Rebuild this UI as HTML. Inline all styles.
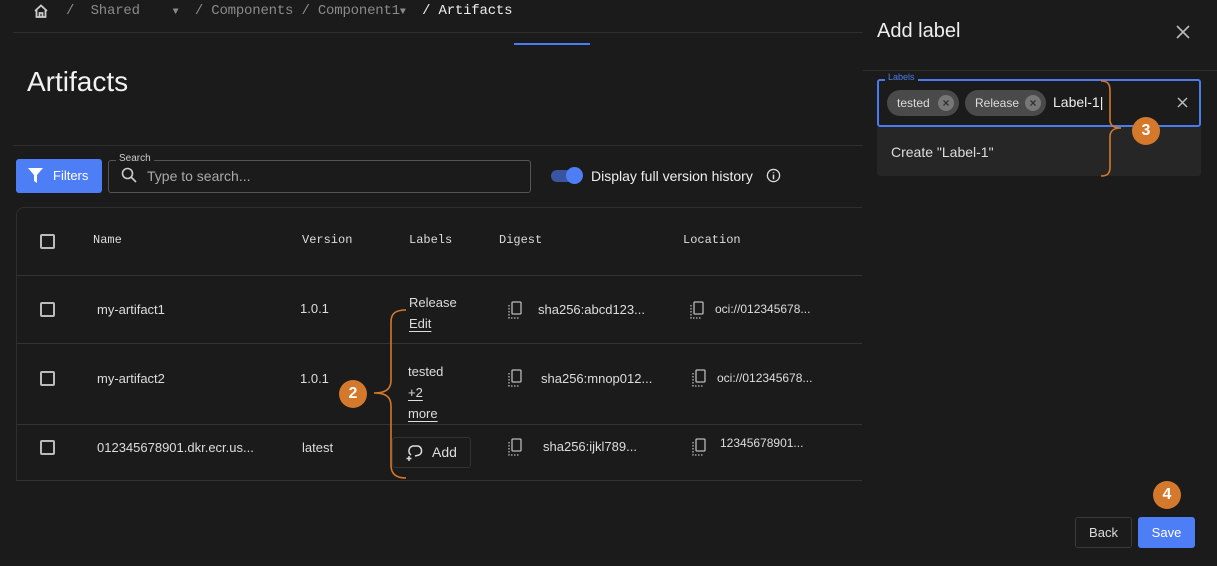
<!DOCTYPE html>
<html><head><meta charset="utf-8"><style>
*{box-sizing:border-box;margin:0;padding:0}
body{width:1217px;height:566px;background:#1b1b1b;color:#e6e6e6;font-family:"Liberation Sans",sans-serif;position:relative;overflow:hidden;font-size:14px}
.a{position:absolute;white-space:nowrap}
.mono{font-family:"Liberation Mono",monospace}
.hl{position:absolute;height:1px;background:#333}
.cb{position:absolute;width:15px;height:15px;border:2px solid #bbb;border-radius:2px}
.badge{position:absolute;width:28px;height:28px;border-radius:50%;background:#d4782c;color:#fff;font-weight:bold;font-size:16px;text-align:center;line-height:28px}
.chip{position:absolute;height:26px;border-radius:13px;background:#4a4a4a;color:#ddd;font-size:12px;line-height:26px;padding-left:10px}
.chip i{position:absolute;right:5px;top:5px;width:16px;height:16px;border-radius:50%;background:#777;color:#333;font-style:normal;font-size:12px;line-height:16px;text-align:center;font-weight:bold}
u{text-decoration:underline;text-underline-offset:3px}
.th{font-size:12px;top:233px}
</style></head><body>
<svg class="a" style="left:33px;top:3px" width="16" height="16" viewBox="0 0 16 16"><path d="M2 8L8 2.5 14 8M3.5 7v7h9V7M6.5 14V10h3v4" fill="none" stroke="#ccc" stroke-width="1.8"/></svg>
<div class="a mono" style="left:66px;top:3px;font-size:14px;color:#8a8a8a;letter-spacing:-0.2px">/&nbsp;&nbsp;Shared&nbsp;&nbsp;&nbsp;&nbsp;<span style="font-size:10px">▼</span>&nbsp;&nbsp;/ Components / Component1<span style="font-size:10px">▼</span>&nbsp;&nbsp;<span style="color:#eee">/ Artifacts</span></div>
<div class="hl" style="left:13px;top:32px;width:850px;background:#2e2e2e"></div>
<div class="a" style="left:514px;top:43px;width:76px;height:2px;background:#4a7cf0"></div>
<div class="a" style="left:27px;top:66px;font-size:28px;color:#f2f2f2">Artifacts</div>
<div class="hl" style="left:13px;top:145px;width:850px;background:#2e2e2e"></div>
<div class="a" style="left:16px;top:159px;width:86px;height:34px;background:#4d7ef5;border-radius:3px;color:#fff;font-size:13px;line-height:34px;padding-left:37px">Filters</div>
<svg class="a" style="left:28px;top:168px" width="15" height="16" viewBox="0 0 15 16"><path d="M0 0h15L9 7v8L6 13V7z" fill="#fff"/></svg>
<div class="a" style="left:108px;top:160px;width:423px;height:33px;border:1px solid #555;border-radius:3px"></div>
<div class="a" style="left:116px;top:153px;background:#1b1b1b;padding:0 3px;font-size:10px;color:#ccc">Search</div>
<svg class="a" style="left:121px;top:167px" width="16" height="16" viewBox="0 0 16 16"><circle cx="6.5" cy="6.5" r="5" fill="none" stroke="#ccc" stroke-width="1.6"/><path d="M10 10l5 5" stroke="#ccc" stroke-width="1.6"/></svg>
<div class="a" style="left:147px;top:168px;font-size:14px;color:#aaa">Type to search...</div>
<div class="a" style="left:551px;top:170px;width:30px;height:12px;border-radius:6px;background:#3a55a0"></div>
<div class="a" style="left:566px;top:167px;width:17px;height:17px;border-radius:50%;background:#4d7ef5"></div>
<div class="a" style="left:591px;top:168px;font-size:14px;color:#eee">Display full version history</div>
<svg class="a" style="left:766px;top:168px" width="15" height="15" viewBox="0 0 16 16"><circle cx="8" cy="8" r="6.5" fill="none" stroke="#ddd" stroke-width="1.4"/><path d="M8 7v5M8 4.5v1" stroke="#ddd" stroke-width="1.6"/></svg>

<div class="a" style="left:16px;top:207px;width:846px;height:274px;border-left:1px solid #2e2e2e;border-top:1px solid #2e2e2e;border-top-left-radius:8px"></div>
<div class="hl" style="left:16px;top:275px;width:846px"></div>
<div class="hl" style="left:16px;top:343px;width:846px"></div>
<div class="hl" style="left:16px;top:424px;width:846px"></div>
<div class="hl" style="left:16px;top:480px;width:846px"></div>
<div class="cb" style="left:40px;top:234px"></div>
<div class="a mono th" style="left:93px;color:#ddd">Name</div>
<div class="a mono th" style="left:302px;color:#ddd">Version</div>
<div class="a mono th" style="left:409px;color:#ddd">Labels</div>
<div class="a mono th" style="left:499px;color:#ddd">Digest</div>
<div class="a mono th" style="left:683px;color:#ddd">Location</div>

<div class="cb" style="left:40px;top:302px"></div>
<div class="a" style="left:97px;top:302px;font-size:13px;color:#ddd">my-artifact1</div>
<div class="a" style="left:300px;top:301px;font-size:13px;color:#ddd">1.0.1</div>
<div class="a" style="left:409px;top:292px;font-size:13px;color:#ddd;line-height:21px">Release<br><u>Edit</u></div>
<div class="cb" style="left:40px;top:371px"></div>
<div class="a" style="left:97px;top:371px;font-size:13px;color:#ddd">my-artifact2</div>
<div class="a" style="left:300px;top:371px;font-size:13px;color:#ddd">1.0.1</div>
<div class="a" style="left:408px;top:361px;font-size:13px;color:#ddd;line-height:21px">tested<br><u>+2</u><br><u>more</u></div>
<div class="cb" style="left:40px;top:440px"></div>
<div class="a" style="left:97px;top:440px;font-size:13px;color:#ddd">012345678901.dkr.ecr.us...</div>
<div class="a" style="left:302px;top:440px;font-size:13px;color:#ddd">latest</div>
<div class="a" style="left:392px;top:437px;width:79px;height:31px;border:1px solid #333;border-radius:3px;font-size:14px;line-height:29px;padding-left:39px;color:#ddd">Add</div>
<svg class="a" style="left:406px;top:444px" width="18" height="17" viewBox="0 0 18 17"><path d="M5 11C2 9 2 3 7 2h5c4 1 5 7 1 9l-4 1M3 12v5M0.5 14.5h5" fill="none" stroke="#ddd" stroke-width="1.5"/></svg>

<svg class="a" style="left:0;top:0" width="870" height="500">
<g fill="none" stroke="#bbb" stroke-width="1.3">
<rect x="512" y="302" width="9" height="12" rx="1"/><path d="M509 305v13h10" stroke-dasharray="1.5 1.5"/>
<rect x="512" y="370" width="9" height="12" rx="1"/><path d="M509 373v13h10" stroke-dasharray="1.5 1.5"/>
<rect x="512" y="439" width="9" height="12" rx="1"/><path d="M509 442v13h10" stroke-dasharray="1.5 1.5"/>
<rect x="694" y="302" width="9" height="12" rx="1"/><path d="M691 305v13h10" stroke-dasharray="1.5 1.5"/>
<rect x="696" y="370" width="9" height="12" rx="1"/><path d="M693 373v13h10" stroke-dasharray="1.5 1.5"/>
<rect x="696" y="439" width="9" height="12" rx="1"/><path d="M693 442v13h10" stroke-dasharray="1.5 1.5"/>
</g>
<path d="M406 310C396 310 391 313 391 322V380C391 389 386 393 374 393C386 393 391 397 391 406V465C391 474 396 478 406 478" fill="none" stroke="#d4782c" stroke-width="1.6"/>
</svg>
<div class="a" style="left:538px;top:302px;font-size:13px;color:#ddd">sha256:abcd123...</div>
<div class="a" style="left:541px;top:371px;font-size:13px;color:#ddd">sha256:mnop012...</div>
<div class="a" style="left:543px;top:439px;font-size:13px;color:#ddd">sha256:ijkl789...</div>
<div class="a" style="left:715px;top:302px;font-size:12px;color:#ddd">oci://012345678...</div>
<div class="a" style="left:717px;top:371px;font-size:12px;color:#ddd">oci://012345678...</div>
<div class="a" style="left:720px;top:436px;font-size:12px;color:#ddd">12345678901...</div>
<div class="badge" style="left:339px;top:380px">2</div>

<div class="a" style="left:877px;top:20px;font-size:20px;color:#eee">Add label</div>
<svg class="a" style="left:1176px;top:25px" width="14" height="14" viewBox="0 0 14 14"><path d="M1 1l12 12M13 1L1 13" stroke="#bbb" stroke-width="1.6"/></svg>
<div class="hl" style="left:863px;top:70px;width:354px;background:#2e2e2e"></div>
<div class="a" style="left:877px;top:79px;width:324px;height:48px;border:2px solid #4a7cf0;border-radius:3px"></div>
<div class="a" style="left:885px;top:72px;background:#1b1b1b;padding:0 3px;font-size:9px;color:#4a7cf0">Labels</div>
<div class="chip" style="left:887px;top:90px;width:72px">tested<i>×</i></div>
<div class="chip" style="left:965px;top:90px;width:81px">Release<i>×</i></div>
<div class="a" style="left:1053px;top:94px;font-size:14px;color:#eee">Label-1|</div>
<svg class="a" style="left:1177px;top:97px" width="11" height="11" viewBox="0 0 11 11"><path d="M1 1l9 9M10 1L1 10" stroke="#bbb" stroke-width="1.5"/></svg>
<div class="a" style="left:877px;top:127px;width:324px;height:49px;background:#262626;border-radius:0 0 3px 3px;font-size:14px;line-height:50px;padding-left:14px;color:#ddd">Create "Label-1"</div>
<svg class="a" style="left:1095px;top:75px" width="30" height="105"><path d="M6 6C13 6 15 9 15 16V45C15 50 18 53 26 53C18 53 15 56 15 62V92C15 98 13 101 6 101" fill="none" stroke="#d4782c" stroke-width="1.6"/></svg>
<div class="badge" style="left:1132px;top:117px">3</div>
<div class="badge" style="left:1153px;top:481px">4</div>
<div class="a" style="left:1075px;top:517px;width:57px;height:31px;border:1px solid #3a3a3a;border-radius:3px;font-size:13px;line-height:29px;text-align:center;color:#ddd">Back</div>
<div class="a" style="left:1138px;top:517px;width:57px;height:31px;background:#4d7ef5;border-radius:3px;font-size:13px;line-height:31px;text-align:center;color:#fff">Save</div>
</body></html>
